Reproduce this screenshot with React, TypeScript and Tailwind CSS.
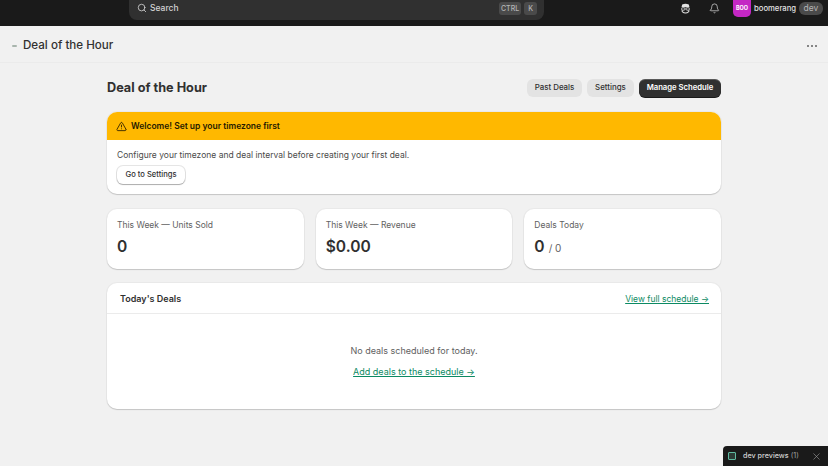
import { AlertTriangle, Bell, Search, X } from "lucide-react";

const font = { fontFamily: "Inter, sans-serif" };

const stats = [
  { label: "This Week — Units Sold", value: "0" },
  { label: "This Week — Revenue", value: "$0.00" },
  { label: "Deals Today", value: "0", suffix: "/ 0" },
];

const cardClass = "rounded-[10px] bg-white shadow-[0_1px_1px_rgba(0,0,0,0.16),0_0_0_1px_rgba(0,0,0,0.03)]";

const App = () => {
  return (
    <div className="relative h-[466px] w-[828px] overflow-hidden bg-[#f1f1f1] font-['Inter',sans-serif]" style={font}>
      <div className="flex h-[26px] items-start bg-[#1a1a1a] pl-[129px] pr-[5px]">
        <div className="flex h-[20px] w-[415px] items-center justify-between rounded-b-[8px] bg-[#303030] pb-[4px] pl-[8px] pr-[7px]">
          <div className="flex items-center gap-[3px]">
            <Search size={10} strokeWidth={1.8} className="text-[#e3e3e3]" />
            <span className="text-[8.5px] font-medium text-[#d4d4d4]">Search</span>
          </div>
          <div className="flex items-center gap-[3px]">
            <span className="rounded-[3px] bg-[#4a4a4a] px-[2px] py-[1px] text-[7px] leading-[11px] font-medium text-[#b5b5b5]">CTRL</span>
            <span className="rounded-[3px] bg-[#4a4a4a] px-[4px] py-[1px] text-[7px] leading-[11px] font-medium text-[#b5b5b5]">K</span>
          </div>
        </div>
        <div className="ml-auto flex items-start">
          <svg width="11" height="11" viewBox="0 0 12 12" className="mt-[3px]">
            <path d="M1.6 4.6 L2.4 1.6 Q6 0 9.6 1.6 L10.4 4.6 Z" fill="#e3e3e3" />
            <path d="M2.4 7.2 V9.4 Q6 12.6 9.6 9.4 V7.2" fill="none" stroke="#e3e3e3" strokeWidth="1.1" />
            <rect x="1.8" y="5.2" width="3.6" height="2.6" rx="1" fill="#1a1a1a" stroke="#e3e3e3" strokeWidth="0.9" />
            <rect x="6.6" y="5.2" width="3.6" height="2.6" rx="1" fill="#1a1a1a" stroke="#e3e3e3" strokeWidth="0.9" />
          </svg>
          <Bell size={11} strokeWidth={1.5} className="ml-[18px] mt-[3px] text-[#e3e3e3]" />
          <div className="ml-[13px] flex h-[17px] w-[18px] items-center justify-center rounded-b-[5px] bg-[#c427c4] text-[5.5px] font-bold text-white">BOO</div>
          <span className="ml-[3px] mt-[2px] w-[42px] text-[7.7px] leading-[13px] font-medium whitespace-nowrap text-[#e3e3e3]">boomerang</span>
          <span className="ml-[3px] mt-[2px] w-[24px] rounded-[6px] bg-[#4a4a4a] text-center text-[8.5px] leading-[13px] text-[#b5b5b5]">dev</span>
        </div>
      </div>

      <div className="flex h-[37px] items-center justify-between border-b border-[#ebebeb] pl-[12px] pr-[11px] pt-[4px]">
        <div className="flex items-center gap-[6px]">
          <span className="h-[2px] w-[5px] rounded-[1px] bg-[#a8b5ad]" />
          <span className="text-[11.6px] font-medium text-[#303030]">Deal of the Hour</span>
        </div>
        <div className="flex gap-[2px]">
          <span className="h-[2px] w-[2px] rounded-full bg-[#616161]" />
          <span className="h-[2px] w-[2px] rounded-full bg-[#616161]" />
          <span className="h-[2px] w-[2px] rounded-full bg-[#616161]" />
        </div>
      </div>

      <div className="mx-auto w-[614px] pt-[15px]">
        <div className="flex h-[20px] items-center justify-between">
          <h1 className="text-[12.7px] font-bold text-[#303030]">Deal of the Hour</h1>
          <div className="flex items-center gap-[5px]">
            <button className="h-[18px] w-[55px] rounded-[6px] bg-[#e3e3e3] text-[7.9px] font-medium text-[#303030]">Past Deals</button>
            <button className="h-[18px] w-[47px] rounded-[6px] bg-[#e3e3e3] text-[7.9px] font-medium text-[#303030]">Settings</button>
            <button className="h-[18px] w-[82px] rounded-[6px] bg-[#303030] text-[7.7px] font-semibold text-white shadow-[inset_0_1px_0_rgba(255,255,255,0.2),0_1px_0_#1a1a1a]">Manage Schedule</button>
          </div>
        </div>

        <div className={`mt-[14px] h-[82px] overflow-hidden ${cardClass}`}>
          <div className="flex h-[28px] items-center gap-[4px] bg-[#ffb800] pl-[9px]">
            <AlertTriangle size={11} strokeWidth={1.8} className="text-[#251a00]" />
            <span className="text-[8.5px] font-semibold text-[#251a00]">Welcome! Set up your timezone first</span>
          </div>
          <div className="pl-[10px] pt-[9px]">
            <p className="text-[8.5px] leading-[13px] text-[#4a4a4a]">Configure your timezone and deal interval before creating your first deal.</p>
            <button className="mt-[4px] block h-[18px] w-[68px] rounded-[6px] bg-white text-[7.6px] font-medium text-[#303030] shadow-[0_1px_1px_rgba(0,0,0,0.25),0_0_0_1px_rgba(0,0,0,0.1)]">Go to Settings</button>
          </div>
        </div>

        <div className="mt-[15px] grid grid-cols-3 gap-[12px]">
          {stats.map((stat) => (
            <div key={stat.label} className={`h-[60px] pl-[10px] pt-[10px] ${cardClass}`}>
              <div className="text-[8.5px] leading-[12px] text-[#616161]">{stat.label}</div>
              <div className="mt-[5px] flex items-baseline gap-[4px]">
                <span className="text-[15.6px] leading-[22px] font-semibold text-[#303030]">{stat.value}</span>
                {stat.suffix ? <span className="text-[10px] text-[#616161]">{stat.suffix}</span> : null}
              </div>
            </div>
          ))}
        </div>

        <div className={`mt-[14px] h-[126px] ${cardClass}`}>
          <div className="flex h-[31px] items-center justify-between border-b border-[#ebebeb] pl-[13px] pr-[12px] pt-[2px]">
            <span className="text-[9px] font-semibold text-[#303030]">Today's Deals</span>
            <a className="text-[8.5px] text-[#0c8a63] underline">View full schedule →</a>
          </div>
          <div className="flex flex-col items-center pt-[30px]">
            <p className="text-[9px] leading-[13px] text-[#616161]">No deals scheduled for today.</p>
            <a className="mt-[8px] text-[9px] leading-[13px] text-[#0c8a63] underline">Add deals to the schedule →</a>
          </div>
        </div>
      </div>

      <div className="absolute bottom-0 right-0 flex h-[20px] w-[105px] items-center rounded-tl-[4px] bg-[#1a1a1a] pl-[5px]">
        <span className="flex h-[8px] w-[8px] items-center justify-center rounded-[1px] border border-[#5fb9a0] bg-[#2c3b36]" />
        <span className="ml-[7px] text-[7.2px] font-medium text-[#d4d4d4]">dev previews</span>
        <span className="ml-[2px] text-[7.2px] text-[#a0a0a0]">(1)</span>
        <X size={11} strokeWidth={1.3} className="ml-auto mr-[6px] text-[#a0a0a0]" />
      </div>
    </div>
  );
};

export default App;
